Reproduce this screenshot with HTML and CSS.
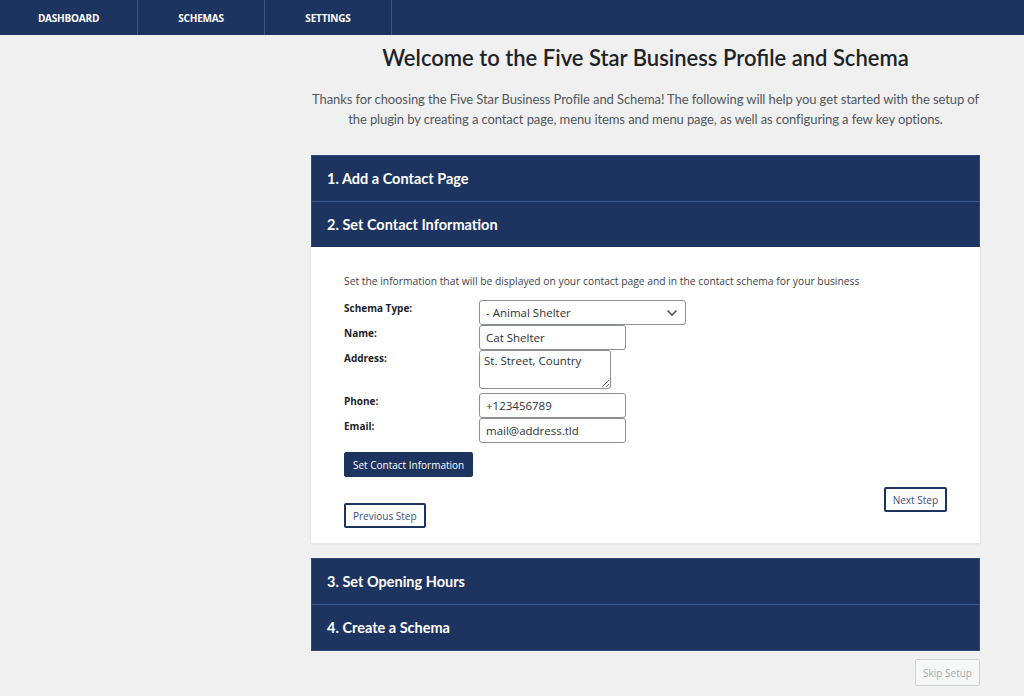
FILE: index.html
```html
<!DOCTYPE html>
<html lang="en">
  <head>
    <meta charset="UTF-8" />
    <meta name="viewport" content="width=device-width, initial-scale=1.0" />
    <title>Five Star Business Profile and Schema - Setup</title>
    <link rel="stylesheet" href="styles.css">
  </head>
  <body>
    <nav class="top-nav">
      <a href="#" class="nav-item">Dashboard</a>
      <a href="#" class="nav-item">Schemas</a>
      <a href="#" class="nav-item">Settings</a>
    </nav>

    <main class="wizard">
      <h1>Welcome to the Five Star Business Profile and Schema</h1>
      <p class="intro">
        Thanks for choosing the Five Star Business Profile and Schema! The following will help you get started with the setup of
        the plugin by creating a contact page, menu items and menu page, as well as configuring a few key options.
      </p>

      <div class="steps">
        <div class="step-title">1. Add a Contact Page</div>
        <div class="step-title">2. Set Contact Information</div>
        <div class="step-body">
          <p class="step-desc">Set the information that will be displayed on your contact page and in the contact schema for your business</p>

          <div class="form-row">
            <label for="schema-type">Schema Type:</label>
            <div class="select-wrap">
              <select id="schema-type">
                <option>- Animal Shelter</option>
              </select>
              <svg class="chevron" width="12" height="8" viewBox="0 0 12 8">
                <path d="M1.5 1.5 L6 6 L10.5 1.5" fill="none" stroke="#50575e" stroke-width="1.6" />
              </svg>
            </div>
          </div>
          <div class="form-row">
            <label for="name">Name:</label>
            <input type="text" id="name" value="Cat Shelter" />
          </div>
          <div class="form-row">
            <label for="address">Address:</label>
            <textarea id="address">St. Street, Country</textarea>
          </div>
          <div class="form-row">
            <label for="phone">Phone:</label>
            <input type="text" id="phone" value="+123456789" />
          </div>
          <div class="form-row">
            <label for="email">Email:</label>
            <input type="text" id="email" value="mail@address.tld" />
          </div>

          <button class="btn-primary">Set Contact Information</button>

          <div class="step-nav">
            <button class="btn-outline">Previous Step</button>
            <button class="btn-outline next">Next Step</button>
          </div>
        </div>
      </div>

      <div class="steps">
        <div class="step-title">3. Set Opening Hours</div>
        <div class="step-title">4. Create a Schema</div>
      </div>

      <div class="skip-row">
        <button class="btn-skip">Skip Setup</button>
      </div>
    </main>
  </body>
</html>
```

FILE: styles.css
```css
body {
  margin: 0;
  background-color: #f0f0f1;
  font-family: 'Open Sans', 'Noto Sans', sans-serif;
  color: #3c434a;
}
.top-nav {
  display: flex;
  height: 35px;
  background-color: #1d3461;
}
.nav-item {
  display: flex;
  align-items: center;
  justify-content: center;
  width: 126px;
  border-right: 1px solid #3b5587;
  color: #fff;
  font-family: 'Open Sans', sans-serif;
  font-size: 10px;
  font-weight: 700;
  text-transform: uppercase;
  text-decoration: none;
  letter-spacing: -0.2px;
}
.nav-item:first-child {
  width: 137px;
}
.wizard {
  width: 669px;
  margin-left: 311px;
}
h1 {
  margin: 9px 0 0;
  text-align: center;
  font-family: Lato, sans-serif;
  font-size: 22px;
  font-weight: 600;
  color: #1d2327;
}
.intro {
  margin: 18px 0 26px;
  text-align: center;
  font-family: Lato, sans-serif;
  font-size: 13px;
  letter-spacing: -0.1px;
  line-height: 20px;
  color: #50575e;
}
.steps {
  background-color: #1d3461;
  margin-bottom: 15px;
}
.step-title {
  height: 45px;
  display: flex;
  align-items: center;
  padding-left: 15px;
  border: 1px solid #2e4a7c;
  border-bottom: none;
  color: #fff;
  font-family: Lato, sans-serif;
  font-size: 14.5px;
  font-weight: 700;
}
.step-title + .step-title {
  border-top: 1px solid #3b5a92;
}
.step-title:last-child {
  border-bottom: 1px solid #2e4a7c;
}
.step-body {
  background-color: #fff;
  padding: 27px 33px 15px;
  box-shadow: 0 1px 2px rgba(0, 0, 0, 0.08);
}
.step-desc {
  margin: 0 0 12px;
  font-size: 10.3px;
  color: #3c434a;
}
.form-row {
  display: flex;
  align-items: flex-start;
}
.form-row label {
  width: 135px;
  padding-top: 1px;
  font-size: 10px;
  font-weight: 700;
  color: #1d2327;
}
.form-row input,
.form-row textarea,
.select-wrap select {
  box-sizing: border-box;
  border: 1px solid #8c8f94;
  border-radius: 3px;
  background: #fff;
  font-family: 'Open Sans', sans-serif;
  font-size: 11.5px;
  color: #2c3338;
}
.form-row input {
  width: 147px;
  height: 25px;
  padding: 0 6px;
}
.form-row textarea {
  width: 132px;
  height: 39px;
  padding: 2px 4px;
  margin-bottom: 4px;
  resize: vertical;
}
.select-wrap {
  position: relative;
}
.select-wrap select {
  appearance: none;
  width: 207px;
  height: 25px;
  padding: 0 6px;
}
.chevron {
  position: absolute;
  right: 8px;
  top: 9px;
}
.btn-primary {
  margin-top: 9px;
  height: 25px;
  padding: 0 8px;
  border: 1px solid #1d3461;
  border-radius: 2px;
  background-color: #1d3461;
  color: #fff;
  font-family: 'Open Sans', sans-serif;
  font-size: 10px;
  cursor: pointer;
}
.step-nav {
  display: flex;
  justify-content: space-between;
  align-items: flex-start;
  margin-top: 10px;
}
.btn-outline {
  height: 25px;
  padding: 0 7px;
  border: 2px solid #1d3461;
  border-radius: 2px;
  background-color: #fff;
  color: #3c4f7a;
  font-family: 'Open Sans', sans-serif;
  font-size: 10px;
  cursor: pointer;
}
.btn-outline:first-child {
  margin-top: 16px;
}
.skip-row {
  display: flex;
  justify-content: flex-end;
  margin-top: -7px;
}
.btn-skip {
  height: 27px;
  padding: 0 7px;
  border: 1px solid #d0d0d0;
  border-radius: 2px;
  background-color: #f6f7f7;
  color: #a7aaad;
  font-family: 'Open Sans', sans-serif;
  font-size: 10px;
}
```
